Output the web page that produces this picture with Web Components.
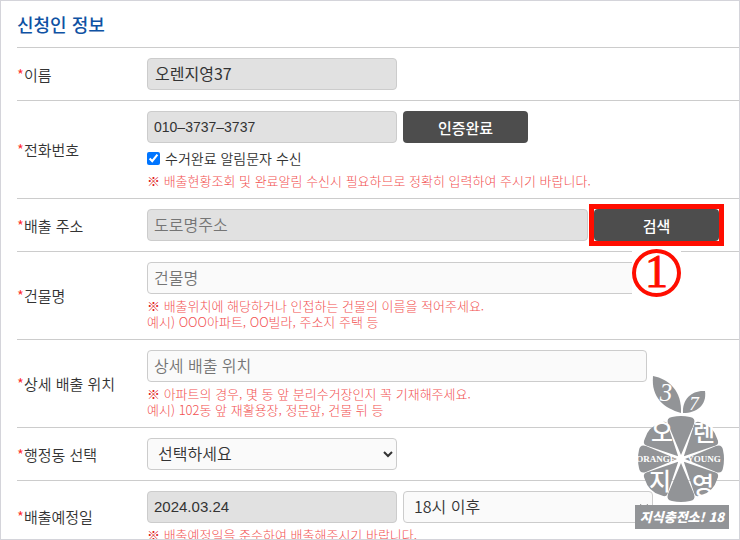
<!DOCTYPE html>
<html lang="ko">
<head>
<meta charset="utf-8">
<meta name="viewport" content="width=device-width, initial-scale=1">
<title>신청인 정보</title>
<style>
body {
    margin: 0;
    font-family: "Noto Sans CJK KR", sans-serif;
    color: #333333;
    background-color: #ffffff;
}
</style>
</head>
<body>
<applicant-form></applicant-form>

<script>
/**
 * One line of the form: a label column and a field column.
 */
class FormRow extends HTMLElement {
    constructor() {
        super();

        this.attachShadow({ mode: "open" }).innerHTML =
`
<style>
:host {
    display: grid;
    grid-template-columns: 130px minmax(0, 1fr);
    box-sizing: border-box;
    min-height: 53px;
    padding: 10px 20px 9px 0;
    border-top: 1px solid #cccccc;
}

.label {
    align-self: center;
    font-size: 15px;
    font-weight: 350;
    line-height: 20px;
}

.mark {
    color: #ff2a2a;
}

.fields {
    display: flex;
    flex-direction: column;
    gap: 4px;
}
</style>
<div class="label"><span class="mark">*</span><slot name="label"></slot></div>
<div class="fields"><slot></slot></div>
`;
    }
}

class FormHint extends HTMLElement {
    constructor() {
        super();

        this.attachShadow({ mode: "open" }).innerHTML =
`
<style>
:host {
    display: block;
    font-size: 13px;
    font-weight: 300;
    line-height: 16px;
    color: #f25050;
}

.mark {
    color: #e02020;
}
</style>
<span class="mark">※</span> <slot></slot>
`;
    }
}

/**
 * Red frame around the slotted control, with a numbered circle below it.
 */
class StepMarker extends HTMLElement {
    constructor() {
        super();

        this.attachShadow({ mode: "open" }).innerHTML =
`
<style>
:host {
    display: inline-flex;
    position: relative;
    outline: 5px solid #ff0d00;
    z-index: 1;
}

.step {
    position: absolute;
    top: 40px;
    left: 0;
    right: 0;
    margin: 0 auto;
    width: 49px;
    background-color: #ffffff;
}

.circle {
    box-sizing: border-box;
    height: 48px;
    border: 4px solid #ff0d00;
    border-radius: 50%;
    font-family: "Liberation Serif", serif;
    font-size: 46px;
    line-height: 38px;
    text-align: center;
    color: #ff0d00;
    -webkit-text-stroke: 1px #ff0d00;
}
</style>
<slot></slot>
<div class="step"><div class="circle"></div></div>
`;
    }

    connectedCallback() {
        this.shadowRoot.querySelector(".circle").textContent = this.getAttribute("step");
    }
}

class OrangeLogo extends HTMLElement {
    constructor() {
        super();

        this.attachShadow({ mode: "open" }).innerHTML =
`
<style>
:host {
    display: block;
    width: 94px;
}

svg {
    display: block;
    width: 100%;
}

.shape {
    fill: #929497;
}

text {
    fill: #ffffff;
    text-anchor: middle;
    font-family: "Noto Sans CJK KR", sans-serif;
}

.name {
    font-size: 24px;
    font-weight: 500;
}

.latin {
    font-family: "Liberation Serif", serif;
    font-size: 9px;
    font-weight: bold;
}

.digit {
    font-family: "Liberation Serif", serif;
    font-style: italic;
}

.band {
    font-size: 13px;
    font-weight: 900;
    font-style: italic;
}
</style>
<svg viewBox="0 0 94 154">
    <defs>
        <path id="narrow" d="M0-4L-13-35Q-15-41-9-42Q0-44 9-42Q15-41 13-35Z"/>
        <path id="wide" d="M0-4L-15-34Q-17-38-11-40Q0-46 11-40Q17-38 15-34Z"/>
    </defs>
    <g class="shape">
        <path d="M18 1C34 4 47 16 46 38C29 33 16 23 18 1Z"/>
        <path d="M70 16C72 30 62 38 48 38C47 24 57 15 70 16Z"/>
        <g transform="translate(46 84)">
            <use href="#narrow"/>
            <use href="#wide" transform="rotate(45)"/>
            <use href="#narrow" transform="rotate(90)"/>
            <use href="#wide" transform="rotate(135)"/>
            <use href="#narrow" transform="rotate(180)"/>
            <use href="#wide" transform="rotate(225)"/>
            <use href="#narrow" transform="rotate(270)"/>
            <use href="#wide" transform="rotate(315)"/>
        </g>
        <rect y="130" width="94" height="24"/>
    </g>
    <circle cx="46" cy="84" r="4" fill="#ffffff"/>
    <text class="digit" x="31" y="26" font-size="25">3</text>
    <text class="digit" x="59" y="35" font-size="19">7</text>
    <text class="name" x="27" y="66">오</text>
    <text class="name" x="69" y="66">렌</text>
    <text class="name" x="25" y="115">지</text>
    <text class="name" x="68" y="119">영</text>
    <text class="latin" x="21" y="87">ORANGE</text>
    <text class="latin" x="69" y="87">YOUNG</text>
    <text class="band" x="47" y="147">지식충전소! 18</text>
</svg>
`;
    }
}

class ApplicantForm extends HTMLElement {
    constructor() {
        super();

        this.attachShadow({ mode: "open" }).innerHTML =
`
<style>
:host {
    display: block;
    position: relative;
    box-sizing: border-box;
    height: 100vh;
    overflow: hidden;
    padding-left: 16px;
    border: 1px solid #d4d4da;
}

h1 {
    margin: 0;
    font-size: 18px;
    font-weight: 500;
    line-height: 46px;
    color: #0f52a3;
}

input, select, button {
    box-sizing: border-box;
    height: 32px;
    margin: 0;
    border: 1px solid #cccccc;
    border-radius: 4px;
    font: 350 16px "Noto Sans CJK KR", sans-serif;
    color: #333333;
}

input, select {
    width: 250px;
    background-color: #fafafa;
}

input {
    padding: 0 6px 2px;
}

input::placeholder {
    color: #757575;
}

input:read-only {
    background-color: #e1e1e1;
}

select {
    padding: 0 0 2px 6px;
}

button {
    width: 125px;
    border: 0;
    font-size: 15px;
    font-weight: 500;
    color: #ffffff;
    background-color: #4d4d4d;
}

.line {
    display: flex;
    gap: 6px;
}

#name {
    padding: 0 7px 2px;
    font-weight: 400;
}

#phone {
    padding: 0 6px;
    font: 14px "Liberation Sans", sans-serif;
}

#date {
    font: 15px "Liberation Sans", sans-serif;
}

#address {
    flex: 1;
    min-width: 0;
}

.long {
    width: 100%;
    max-width: 500px;
}

.check {
    display: flex;
    align-items: center;
    gap: 5px;
    font-size: 14px;
    font-weight: 350;
    line-height: 22px;
}

.check input {
    width: 13px;
    height: 13px;
}

orange-logo {
    position: absolute;
    right: 10px;
    bottom: 10px;
}
</style>
<h1>신청인 정보</h1>
<form>
    <form-row>
        <label slot="label" for="name">이름</label>
        <input id="name" type="text" value="오렌지영37" readonly>
    </form-row>
    <form-row>
        <label slot="label" for="phone">전화번호</label>
        <div class="line">
            <input id="phone" type="text" value="010–3737–3737" readonly>
            <button type="button">인증완료</button>
        </div>
        <label class="check"><input type="checkbox" checked>수거완료 알림문자 수신</label>
        <form-hint>배출현황조회 및 완료알림 수신시 필요하므로 정확히 입력하여 주시기 바랍니다.</form-hint>
    </form-row>
    <form-row>
        <label slot="label" for="address">배출 주소</label>
        <div class="line">
            <input id="address" type="text" placeholder="도로명주소" readonly>
            <step-marker step="1"><button type="button">검색</button></step-marker>
        </div>
    </form-row>
    <form-row>
        <label slot="label" for="building">건물명</label>
        <input id="building" class="long" type="text" placeholder="건물명">
        <form-hint>배출위치에 해당하거나 인접하는 건물의 이름을 적어주세요.<br>예시) OOO아파트, OO빌라, 주소지 주택 등</form-hint>
    </form-row>
    <form-row>
        <label slot="label" for="place">상세 배출 위치</label>
        <input id="place" class="long" type="text" placeholder="상세 배출 위치">
        <form-hint>아파트의 경우, 몇 동 앞 분리수거장인지 꼭 기재해주세요.<br>예시) 102동 앞 재활용장, 정문앞, 건물 뒤 등</form-hint>
    </form-row>
    <form-row>
        <label slot="label" for="district">행정동 선택</label>
        <select id="district"><option>선택하세요</option></select>
    </form-row>
    <form-row>
        <label slot="label" for="date">배출예정일</label>
        <div class="line">
            <input id="date" type="text" value="2024.03.24" readonly>
            <select aria-label="시간"><option>18시 이후</option></select>
        </div>
        <form-hint>배출예정일을 준수하여 배출해주시기 바랍니다.</form-hint>
    </form-row>
</form>
<orange-logo></orange-logo>
`;
    }
}

window.customElements.define("form-row", FormRow);
window.customElements.define("form-hint", FormHint);
window.customElements.define("step-marker", StepMarker);
window.customElements.define("orange-logo", OrangeLogo);
window.customElements.define("applicant-form", ApplicantForm);
</script>
</body>
</html>
